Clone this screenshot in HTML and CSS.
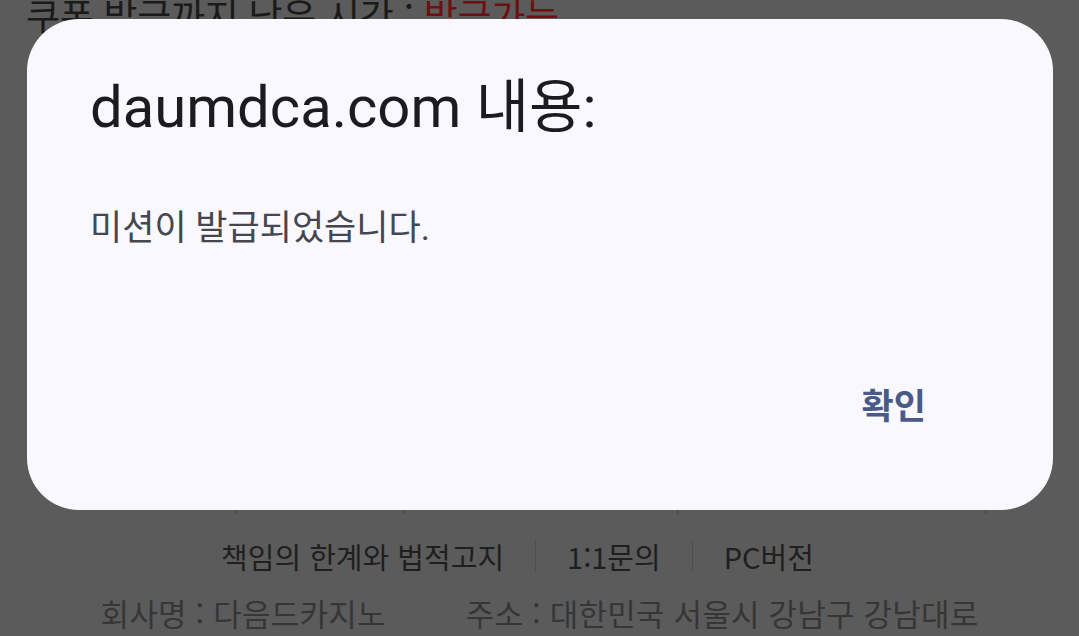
FILE: index.html
```html
<!DOCTYPE html>
<html lang="ko">
<head>
    <meta charset="UTF-8">
    <title>daumdca.com</title>
    <link rel="stylesheet" href="styles.css">
</head>
<body>
<div id="page">
    <div class="coupon-line">쿠폰 발급까지 남은 시간 : <span class="coupon-state">발급가능</span></div>
    <div class="table-row">
        <span class="cell cell-a"></span>
        <span class="cell cell-b"></span>
        <span class="cell cell-c"></span>
        <span class="cell cell-d"></span>
    </div>
    <div class="footer-links">
        <span>책임의 한계와 법적고지</span>
        <span class="sep"></span>
        <span>1:1문의</span>
        <span class="sep"></span>
        <span>PC버전</span>
    </div>
    <div class="company">
        <span>회사명 : 다음드카지노</span>
        <span>주소 : 대한민국 서울시 강남구 강남대로</span>
    </div>
</div>
<div id="dialog">
    <h1 class="dialog-title">daumdca.com 내용:</h1>
    <p class="dialog-msg">미션이 발급되었습니다.</p>
    <div class="dialog-actions">
        <button class="dialog-btn">확인</button>
    </div>
</div>
</body>
</html>
```
FILE: styles.css
```css
html, body {
    margin: 0;
    height: 100%;
}
body {
    background: #5b5b5b;
    font-family: "Noto Sans CJK KR", "Noto Sans", sans-serif;
    overflow: hidden;
}
#page {
    display: flex;
    flex-direction: column;
    height: 100%;
}
.coupon-line {
    margin-top: -8px;
    padding-left: 26px;
    font-size: 37px;
    line-height: 46px;
    color: #1a1a1a;
    letter-spacing: -0.3px;
    white-space: nowrap;
}
.coupon-state {
    color: #6b1111;
}
.table-row {
    display: flex;
    margin-top: 446px;
    margin-left: 236px;
    height: 30px;
}
.cell {
    border-left: 1px solid #444;
}
.cell-a {
    width: 166px;
}
.cell-b {
    width: 273px;
}
.cell-c {
    width: 307px;
}
.footer-links {
    display: flex;
    justify-content: center;
    align-items: center;
    gap: 31px;
    margin-top: 18px;
    padding-right: 44px;
    height: 48px;
    font-size: 29px;
    color: #1f1f1f;
}
.sep {
    width: 1px;
    height: 32px;
    background: #4e4e4e;
}
.company {
    display: flex;
    justify-content: center;
    gap: 80px;
    margin-top: 11px;
    font-size: 31px;
    line-height: 44px;
    letter-spacing: 0.2px;
    color: #363636;
}
#dialog {
    position: fixed;
    left: 27px;
    top: 19px;
    width: 1026px;
    height: 491px;
    box-sizing: border-box;
    padding: 54px 127px 0 63px;
    background: #f8f8fe;
    border-radius: 52px;
    display: flex;
    flex-direction: column;
    font-family: Roboto, "Noto Sans CJK KR", sans-serif;
}
.dialog-title {
    margin: 0;
    font-size: 58px;
    font-weight: 400;
    line-height: 68px;
    color: #1c1b20;
}
.dialog-msg {
    margin: 66px 0 0 0;
    font-size: 35px;
    line-height: 44px;
    color: #46464e;
}
.dialog-actions {
    display: flex;
    justify-content: flex-end;
    margin-top: 131px;
}
.dialog-btn {
    border: none;
    background: none;
    padding: 0;
    font-family: "Noto Sans CJK KR", sans-serif;
    font-size: 35px;
    line-height: 44px;
    font-weight: 700;
    color: #4a5a88;
}
```
